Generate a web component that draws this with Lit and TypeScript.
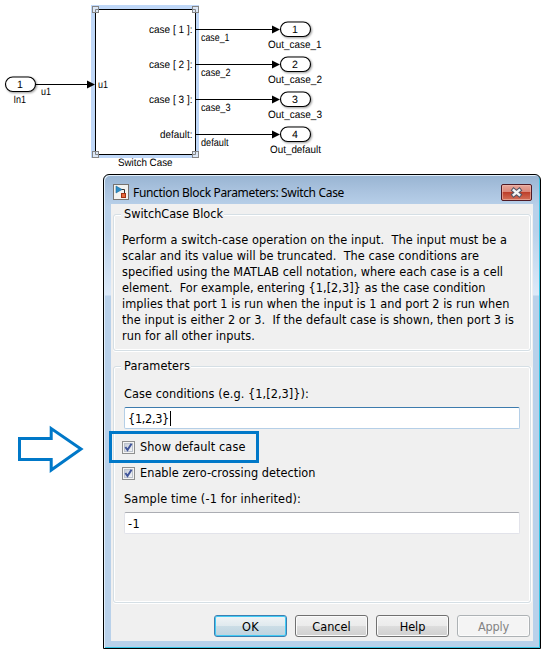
import { LitElement, html, svg, css } from "lit";
import { customElement, property } from "lit/decorators.js";

/** A single line of text spaced out to a given width. */
@customElement("fit-line")
class FitLine extends LitElement {
  @property() text = "";
  @property({ type: Number }) span = 0;

  static styles = css`
    :host { display: block; white-space: pre; line-height: inherit; }
    .t { display: inline-block; white-space: pre; }
  `;

  render() {
    return html`<span class="t">${this.text}</span>`;
  }

  updated() {
    const el = this.renderRoot.querySelector(".t") as HTMLElement;
    el.style.letterSpacing = "0";
    const w = el.getBoundingClientRect().width;
    if (this.span && w) el.style.letterSpacing = (this.span - w) / this.text.length + "px";
  }
}

/** The Switch Case block with its input and output ports. */
@customElement("block-diagram")
class BlockDiagram extends LitElement {
  static styles = css`
    :host { display: block; height: 174px; }
    .canvas { display: block; font-family: "Liberation Sans", Arial, sans-serif; font-size: 10.6px; text-rendering: geometricPrecision; }
    .wire { stroke: #000; stroke-width: 1; }
    .port { fill: #fff; stroke: #000; stroke-width: 1.15; filter: drop-shadow(1.5px 1.5px 1px rgba(0, 0, 0, 0.4)); }
    .halo { fill: #c0d8f8; }
    .body { fill: #fff; stroke: #000; }
    .handle { fill: #dce8f8; stroke: #858585; stroke-width: 1; }
    .corner { fill: none; stroke: #858585; }
  `;

  label(text: string, x: number, y: number, w: number) {
    return svg`<text x=${x} y=${y} textLength=${w} lengthAdjust="spacingAndGlyphs">${text}</text>`;
  }

  port(n: number, x: number, y: number) {
    return svg`<rect class="port" x=${x + 0.5} y=${y - 7} width="30" height="14.5" rx="7.25"/>
      <text x=${x + 15} y=${y + 3.5} text-anchor="middle">${n}</text>`;
  }

  wire(x1: number, x2: number, y: number) {
    return svg`<path class="wire" d="M${x1} ${y + 0.5}H${x2 - 4}"/>
      <path d="M${x2 - 8} ${y - 3.5}L${x2} ${y + 0.5}L${x2 - 8} ${y + 4.5}Z"/>`;
  }

  render() {
    const outs = [
      { inner: "case [ 1 ]:", ix: 149, sig: "case_1", sw: 28.5, out: "Out_case_1", ox: 268, ow: 53.5 },
      { inner: "case [ 2 ]:", ix: 149, sig: "case_2", sw: 29.5, out: "Out_case_2", ox: 268, ow: 54 },
      { inner: "case [ 3 ]:", ix: 149, sig: "case_3", sw: 29.5, out: "Out_case_3", ox: 268, ow: 54 },
      { inner: "default:", ix: 160, sig: "default", sw: 27.5, out: "Out_default", ox: 270, ow: 51 },
    ];
    const corners = [[92, 6], [192, 6], [92, 151], [192, 151]];
    return html`<svg class="canvas" width="547" height="174">
      <rect class="halo" x="91" y="5" width="108" height="153"/>
      <rect class="body" x="95.5" y="9.5" width="100" height="145"/>
      ${corners.map(([x, y]) => svg`<rect class="handle" x=${x + 0.5} y=${y + 0.5} width="6" height="6"/>
        <path class="corner" d="M${x < 150 ? x + 3.5 : x + 0.5} ${y + 3.5}h3M${x + 3.5} ${y < 80 ? y + 3.5 : y + 0.5}v3"/>`)}
      ${this.port(1, 5, 84)} ${this.wire(36, 95, 84)}
      ${this.label("In1", 13.5, 102.5, 12.5)} ${this.label("u1", 41, 95, 10)} ${this.label("u1", 98, 87.5, 10)}
      ${outs.map((o, i) => {
        const y = 29 + i * 35;
        return svg`${this.wire(196, 280, y)} ${this.port(i + 1, 280, y)}
          ${this.label(o.inner, o.ix, y + 3.5, 192.5 - o.ix)}
          ${this.label(o.sig, 201, y + 11.5, o.sw)}
          ${this.label(o.out, o.ox, y + 19, o.ow)}`;
      })}
      ${this.label("Switch Case", 118, 166, 54.5)}
    </svg>`;
  }
}

@customElement("param-dialog")
class ParamDialog extends LitElement {
  static styles = css`
    :host { display: block; width: 438px; height: 475px; flex: none; font-family: "DejaVu Sans Condensed", "DejaVu Sans", sans-serif; font-stretch: condensed; font-size: 12.6px; color: #000; line-height: 16px; }
    * { box-sizing: border-box; }
    .window { height: 475px; border: 1px solid #000; border-radius: 6px 6px 0 0; padding: 0 7px 7px;
      background: linear-gradient(#98b4d2 0, #a9c2de 15px, #b9d1ea 32px, #b9d1ea 55px, #dce9f8 119px, #dce9f8 120px, #b9d1ea 121px);
      box-shadow: inset 1px 1px 0 #e2effa, inset -1px -1px 0 #35c4e4; }
    .title { display: flex; align-items: flex-start; height: 29px; padding: 9px 1px 0 2px; font-family: "Noto Sans", "Open Sans", sans-serif; font-size: 12px; }
    .name { margin: 1px 0 0 4px; flex: 1; }
    .app, .close { display: block; }
    .client { height: 437px; background: #f0f0f0; padding: 10px 2px 0 2px; }
    .group { position: relative; border: 1px solid #d5dfe5; border-radius: 3px; box-shadow: inset 0 0 0 1px #fff, 0 1px 0 #fff, 1px 0 0 #fff; }
    .g1 { height: 137px; padding: 17px 0 0 8px; }
    .g2 { height: 237px; margin-top: 15px; padding: 19px 10px 0 10px; }
    .legend { position: absolute; left: 7px; top: -9px; padding: 0 1px 0 3px; background: #f0f0f0; }
    .input { height: 22px; margin-top: 5px; padding: 3px 0 0 3px; background: #fff; border: 1px solid #e2e3ea; border-top-color: #abadb3; border-radius: 2px; display: flex; }
    .focus { border-color: #b5cfe7; border-top-color: #3d7bad; }
    .caret { width: 1px; height: 15px; background: #000; margin-left: 1px; }
    .check { display: flex; align-items: center; gap: 5px; height: 16px; margin-left: -2px; }
    .first { position: relative; margin-top: 10px; }
    .mark { position: absolute; left: -13px; top: -8px; width: 150px; height: 32px; border: 3px solid #0078c8; }
    .second { margin-top: 10px; }
    .sample { margin-top: 10px; }
    .buttons { display: flex; gap: 8px; justify-content: flex-end; margin: 12px 1px 0 0; }
    .btn { width: 73px; height: 22px; display: flex; justify-content: center; border: 1px solid #707070; border-radius: 3px; padding-top: 3px;
      background: linear-gradient(#f2f2f2, #ebebeb 50%, #dddddd 50%, #cfcfcf); box-shadow: inset 0 0 0 1px #fbfbfb; }
    .ok { border-color: #3c7fb1; background: linear-gradient(#f0f4f6, #dfe9ee 50%, #cbdde6 50%, #bed3df); box-shadow: inset 0 0 0 1px #42cbf5; }
    .off { border-color: #adb2b5; background: #f4f4f4; color: #838383; }
  `;

  checkbox() {
    return html`<svg width="13" height="13">
      <defs><linearGradient id="g" x2="1" y2="1"><stop stop-color="#c4cad6"/><stop offset="1" stop-color="#f7f8fa"/></linearGradient></defs>
      <rect x=".5" y=".5" width="12" height="12" fill="#f4f4f4" stroke="#8e8f8f"/>
      <rect x="2.5" y="2.5" width="8" height="8" fill="url(#g)" stroke="#bcc2cc"/>
      <path d="M3.4 6L5.5 9L9.5 2.8" fill="none" stroke="#41559a" stroke-width="2"/>
    </svg>`;
  }

  render() {
    const lines: [string, number][] = [
      ["Perform a switch-case operation on the input.  The input must be a", 385],
      ["scalar and its value will be truncated.  The case conditions are", 357],
      ["specified using the MATLAB cell notation, where each case is a cell", 381],
      ["element.  For example, entering {1,[2,3]} as the case condition", 363.5],
      ["implies that port 1 is run when the input is 1 and port 2 is run when", 387.5],
      ["the input is either 2 or 3.  If the default case is shown, then port 3 is", 392],
      ["run for all other inputs.", 133],
    ];
    return html`<div class="window">
      <div class="title">
        <svg class="app" width="16" height="16">
          <rect x=".5" y=".5" width="15" height="15" fill="#f3f3f1" stroke="#77736f"/>
          <path d="M8 5.5H11.5V9" fill="none" stroke="#333"/>
          <path d="M3 2L9 5.5L3 9Z" fill="#2c8cc4" stroke="#1c6d9f" stroke-width=".6"/>
          <rect x="8.5" y="9.5" width="4" height="4" fill="#e56a3c" stroke="#a43316"/>
        </svg>
        <fit-line class="name" text="Function Block Parameters: Switch Case" span="211"></fit-line>
        <svg class="close" width="31" height="17">
          <defs><linearGradient id="r" x2="0" y2="1"><stop stop-color="#e9a99d"/><stop offset=".48" stop-color="#d98678"/><stop offset=".5" stop-color="#bd3f2b"/><stop offset="1" stop-color="#d6745c"/></linearGradient></defs>
          <rect x=".5" y=".5" width="30" height="16" rx="1.5" fill="url(#r)" stroke="#4f1a25"/>
          <rect x="1.5" y="1.5" width="28" height="14" rx="1" fill="none" stroke="#f0bcb0" stroke-opacity=".6"/>
          <path d="M11 4.8L20 12.2M20 4.8L11 12.2" stroke="#535666" stroke-width="4.4"/>
          <path d="M11.8 5.4L19.2 11.6M19.2 5.4L11.8 11.6" stroke="#f5f5f5" stroke-width="2.5"/>
        </svg>
      </div>
      <div class="client">
        <div class="group g1">
          <fit-line class="legend" text="SwitchCase Block" span="99"></fit-line>
          ${lines.map(([t, w]) => html`<fit-line text=${t} span=${w}></fit-line>`)}
        </div>
        <div class="group g2">
          <fit-line class="legend" text="Parameters" span="66"></fit-line>
          <fit-line text="Case conditions (e.g. {1,[2,3]}):" span="185"></fit-line>
          <div class="input focus"><fit-line text="{1,2,3}" span="41"></fit-line><span class="caret"></span></div>
          <div class="check first">${this.checkbox()}<fit-line text="Show default case" span="105.5"></fit-line><span class="mark"></span></div>
          <div class="check second">${this.checkbox()}<fit-line text="Enable zero-crossing detection" span="175.5"></fit-line></div>
          <fit-line class="sample" text="Sample time (-1 for inherited):" span="177"></fit-line>
          <div class="input"><fit-line text="-1" span="12"></fit-line></div>
        </div>
        <div class="buttons">
          <div class="btn ok"><fit-line text="OK" span="17"></fit-line></div>
          <div class="btn"><fit-line text="Cancel" span="38.5"></fit-line></div>
          <div class="btn"><fit-line text="Help" span="25.5"></fit-line></div>
          <div class="btn off"><fit-line text="Apply" span="31"></fit-line></div>
        </div>
      </div>
    </div>`;
  }
}

@customElement("app-root")
class AppRoot extends LitElement {
  static styles = css`
    :host { display: block; width: 547px; height: 654px; background: #fff; overflow: hidden; }
    .row { display: flex; align-items: flex-start; }
    .pointer { flex: none; margin-top: 250px; }
  `;

  render() {
    return html`<block-diagram></block-diagram>
      <div class="row">
        <svg class="pointer" width="103" height="52">
          <path d="M19.5 14.5H51.2V4.5L81 25L51.2 46V35.5H19.5Z" fill="#fff" stroke="#0078c8" stroke-width="3"/>
        </svg>
        <param-dialog></param-dialog>
      </div>`;
  }
}
